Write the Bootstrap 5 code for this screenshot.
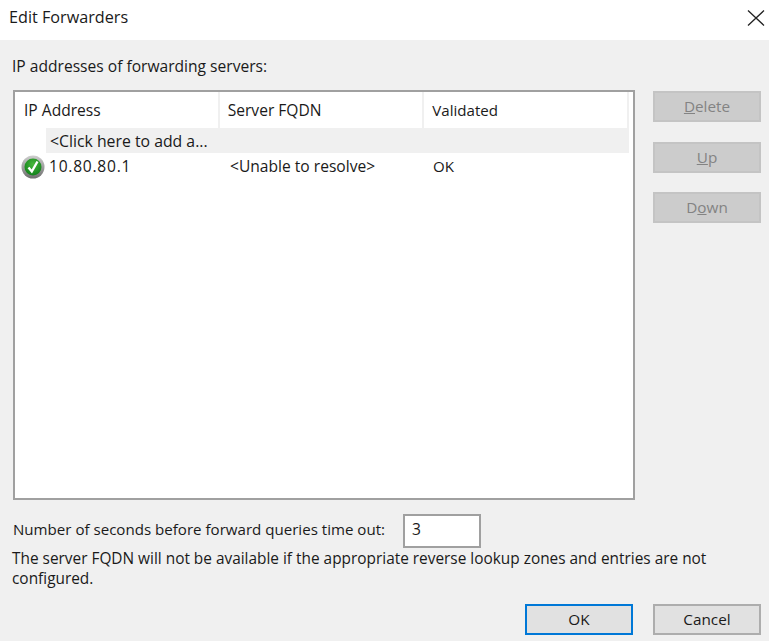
<!DOCTYPE html>
<html lang="en">
<head>
    <meta charset="UTF-8">
    <meta name="viewport" content="width=device-width, initial-scale=1.0">
    <title>Edit Forwarders</title>
    <link href="https://cdn.jsdelivr.net/npm/bootstrap@5.3.0/dist/css/bootstrap.min.css" rel="stylesheet">
    <style>
        html, body {
            height: 641px;
            overflow: hidden;
        }
        body {
            background: #f0f0f0;
            font-family: "Open Sans", "Liberation Sans", sans-serif;
            font-size: 15.6px;
            line-height: 19.5px;
            color: #1a1a1a;
        }
        .dlg-title {
            height: 40px;
            background: #fff;
            padding: 0 4px 4px 9px;
            font-size: 16.2px;
        }
        .dlg-body {
            padding: 17px 8px 0 13px;
        }
        .dlg-label {
            margin-left: -1px;
            height: 20px;
            margin-bottom: 13px;
        }
        .fwd-list {
            width: 622px;
            height: 410px;
            background: #fff;
            border: 2px solid #a0a0a0;
        }
        .fwd-head {
            height: 36px;
            width: 614px;
        }
        .fwd-head > div {
            width: 205px;
            padding-left: 8px;
            padding-top: 2px;
            border-right: 2px solid #f0f0f0;
        }
        .fwd-head > div:first-child {
            padding-left: 9px;
        }
        .fwd-narrow {
            font-size: 15.1px;
        }
        .fwd-add {
            height: 25px;
            margin-left: 31px;
            width: 583px;
            background: #f0f0f0;
            padding-left: 4px;
            padding-top: 2px;
            font-size: 15.8px;
        }
        .fwd-row {
            height: 27px;
            padding-left: 6px;
        }
        .fwd-ip {
            width: 171px;
            padding-left: 4px;
            letter-spacing: 0.75px;
        }
        .fwd-fqdn {
            width: 201px;
            padding-left: 14px;
        }
        .fwd-side {
            width: 108px;
            margin-left: 18px;
            padding-top: 1px;
            gap: 19.5px;
        }
        .win-btn {
            width: 108px;
            height: 31px;
            padding: 0;
            border-radius: 0;
            font-size: 15.3px;
            line-height: 19px;
            color: #1a1a1a;
            background: #e1e1e1;
            border: 2px solid #adadad;
        }
        .win-btn:disabled {
            background: #cccccc;
            border-color: #c4c4c4;
            color: #838383;
            opacity: 1;
        }
        .win-btn.is-default {
            border-color: #0078d7;
        }
        .timeout-row {
            margin-top: 14px;
            height: 34px;
        }
        .timeout-label {
            width: 390px;
            padding-bottom: 3px;
            font-size: 15.1px;
        }
        .timeout-input {
            width: 78px;
            height: 34px;
            border: 2px solid #a0a0a0;
            border-radius: 0;
            padding: 0 7px 4px;
            font-size: 15.6px;
            line-height: 19px;
            color: #1a1a1a;
            background: #fff;
            box-shadow: none;
        }
        .dlg-note {
            width: 740px;
            margin-top: 1px;
            margin-left: -1px;
            font-size: 15.4px;
        }
        .dlg-actions {
            margin-top: 16px;
            gap: 20px;
        }
        .dlg-close {
            width: 18px;
            height: 18px;
            background: none;
            border: 0;
            padding: 0;
        }
    </style>
</head>
<body>
    <div class="dlg-title d-flex align-items-center justify-content-between">
        <span>Edit Forwarders</span>
        <button type="button" class="dlg-close d-flex" aria-label="Close">
            <svg width="18" height="18" viewBox="0 0 18 18" fill="none" stroke="#222" stroke-width="1.3"><path d="M1 1.5 17 16.5M17 1.5 1 16.5"/></svg>
        </button>
    </div>
    <div class="dlg-body">
        <div class="dlg-label">IP addresses of forwarding servers:</div>
        <div class="d-flex">
            <div class="fwd-list">
                <div class="fwd-head d-flex">
                    <div class="d-flex align-items-center">IP Address</div>
                    <div class="d-flex align-items-center">Server FQDN</div>
                    <div class="d-flex align-items-center fwd-narrow">Validated</div>
                </div>
                <div class="fwd-add d-flex align-items-center">&lt;Click here to add a...</div>
                <div class="fwd-row d-flex align-items-center">
                    <svg width="24" height="24" viewBox="0 0 24 24">
                        <defs>
                            <linearGradient id="ringFill" x1="0" y1="0" x2="0" y2="1"><stop offset="0" stop-color="#cfcfcf"/><stop offset="1" stop-color="#6e6e6e"/></linearGradient>
                            <radialGradient id="ballFill" cx="0.5" cy="0.35" r="0.7"><stop offset="0" stop-color="#48b83c"/><stop offset="1" stop-color="#0d7d18"/></radialGradient>
                        </defs>
                        <circle cx="12" cy="12" r="11.5" fill="url(#ringFill)"/>
                        <circle cx="12" cy="12" r="8.5" fill="url(#ballFill)"/>
                        <path d="M7.5 12.5 10.8 16.5 16.5 6.5" fill="none" stroke="#fff" stroke-width="2.4"/>
                    </svg>
                    <div class="fwd-ip">10.80.80.1</div>
                    <div class="fwd-fqdn">&lt;Unable to resolve&gt;</div>
                    <div class="ms-3 fwd-narrow">OK</div>
                </div>
            </div>
            <div class="fwd-side d-flex flex-column">
                <button type="button" class="btn win-btn" disabled><u>D</u>elete</button>
                <button type="button" class="btn win-btn" disabled><u>U</u>p</button>
                <button type="button" class="btn win-btn" disabled>D<u>o</u>wn</button>
            </div>
        </div>
        <div class="timeout-row d-flex align-items-center">
            <label for="timeoutSecs" class="timeout-label">Number of seconds before forward queries time out:</label>
            <input id="timeoutSecs" type="text" class="form-control timeout-input" value="3">
        </div>
        <div class="dlg-note">The server FQDN will not be available if the appropriate reverse lookup zones and entries are not configured.</div>
        <div class="dlg-actions d-flex justify-content-end">
            <button type="button" class="btn win-btn is-default">OK</button>
            <button type="button" class="btn win-btn">Cancel</button>
        </div>
    </div>
    <script src="https://cdn.jsdelivr.net/npm/bootstrap@5.3.0/dist/js/bootstrap.bundle.min.js"></script>
</body>
</html>
